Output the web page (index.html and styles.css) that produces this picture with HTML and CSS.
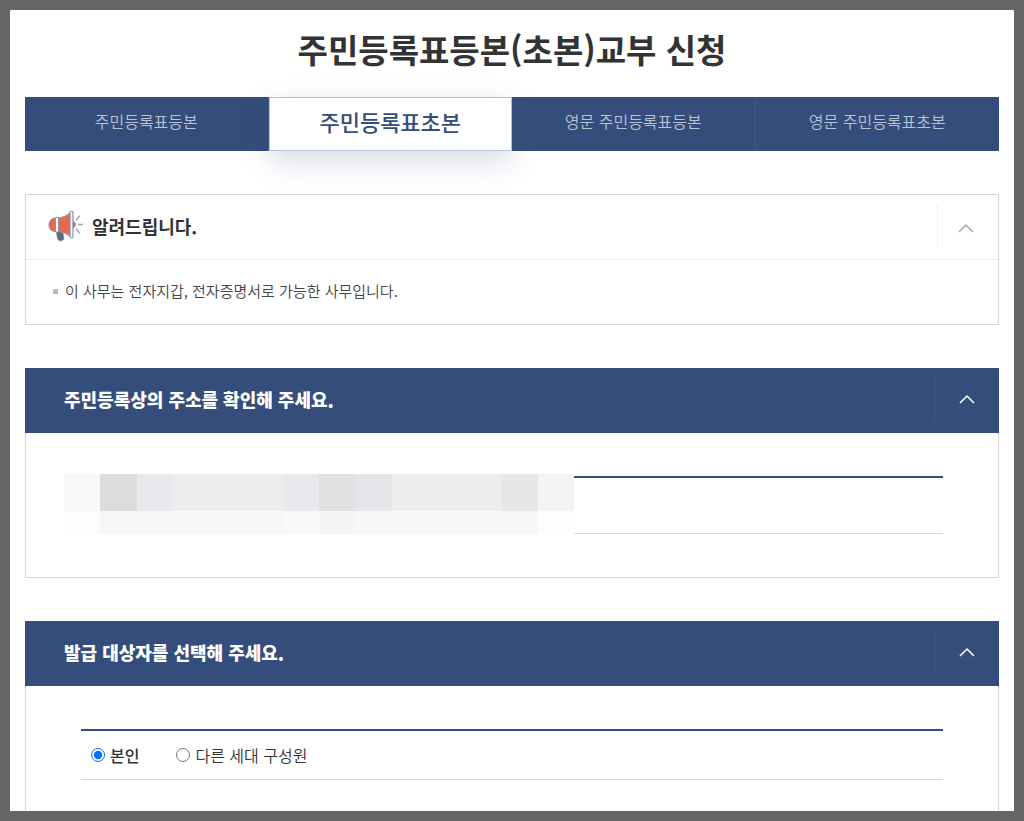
FILE: index.html
```html
<!DOCTYPE html>
<html lang="ko">
<head>
<meta charset="utf-8">
<meta name="viewport" content="width=device-width, initial-scale=1">
<title>주민등록표등본(초본)교부 신청</title>
<link rel="stylesheet" href="styles.css">
</head>
<body>
<main class="page">
  <h1 class="page-title">주민등록표등본(초본)교부 신청</h1>

  <nav class="tabs">
    <a class="tab" href="#">주민등록표등본</a>
    <a class="tab tab-active" href="#" aria-current="page">주민등록표초본</a>
    <a class="tab" href="#">영문 주민등록표등본</a>
    <a class="tab" href="#">영문 주민등록표초본</a>
  </nav>

  <section class="notice">
    <header class="notice-head">
      <svg class="megaphone" viewBox="0 0 36 32" aria-hidden="true">
        <path d="M8 20h6.500l1.500 9q-1 2-3.500 1.800-2.500 0-3-2z" fill="#5b6c80" stroke="#8b91ad" stroke-width=".8"/>
        <path d="M7.500 8H6.500Q1 9.500 1 15T6.500 21.500h1z" fill="#e46a4c" stroke="#8b91ad" stroke-width="1"/>
        <path d="M10.500 8Q17 7.500 23 2.500v24Q17 22 10.500 21.500z" fill="#e46a4c"/>
        <path d="M7.500 7.500h3v14.500h-3z" fill="#fff" stroke="#8b91ad" stroke-width="1"/>
        <path d="M10.500 8Q17 7.500 22.500 2.500M10.500 21.500Q17 22 22.500 26.500" fill="none" stroke="#8b91ad" stroke-width="1"/>
        <path d="M25 11.500q2.500 .5 2.500 3t-2.500 3z" fill="#c95f50" stroke="#8b91ad" stroke-width=".8"/>
        <rect x="22" y="1" width="3" height="27" rx="1.500" fill="#f4f4fa" stroke="#8b91ad" stroke-width="1.200"/>
        <path d="M28.500 10l3-4M30.500 14.500h4M28.500 19l3 4" fill="none" stroke="#a0a4b4" stroke-width="1.300" stroke-linecap="round"/>
      </svg>
      <h2 class="notice-title">알려드립니다.</h2>
      <button class="toggle" type="button" aria-label="접기" aria-expanded="true">
        <svg class="chevron" viewBox="0 0 16 10" aria-hidden="true"><path d="M1 9l7-7 7 7"/></svg>
      </button>
    </header>
    <ul class="notice-list">
      <li class="notice-item">이 사무는 전자지갑, 전자증명서로 가능한 사무입니다.</li>
    </ul>
  </section>

  <section class="panel">
    <header class="panel-head">
      <h2 class="panel-title">주민등록상의 주소를 확인해 주세요.</h2>
      <button class="toggle toggle-light" type="button" aria-label="접기" aria-expanded="true">
        <svg class="chevron" viewBox="0 0 16 10" aria-hidden="true"><path d="M1 9l7-7 7 7"/></svg>
      </button>
    </header>
    <div class="panel-body address">
      <div class="mosaic" aria-hidden="true">
        <i class="m-ice"></i><i class="m-dark"></i><i class="m-blue"></i><i></i><i></i><i></i><i class="m-blue"></i><i class="m-grey"></i><i class="m-steel"></i><i></i><i></i><i></i><i class="m-mid"></i><i class="m-cool"></i>
        <i class="m-faint"></i><i class="m-low"></i><i class="m-low"></i><i class="m-low"></i><i class="m-low"></i><i class="m-low"></i><i class="m-pale"></i><i class="m-soft"></i><i class="m-low"></i><i class="m-low"></i><i class="m-low"></i><i class="m-low"></i><i class="m-low"></i><i class="m-faint"></i>
      </div>
      <div class="address-row"></div>
    </div>
  </section>

  <section class="panel">
    <header class="panel-head">
      <h2 class="panel-title">발급 대상자를 선택해 주세요.</h2>
      <button class="toggle toggle-light" type="button" aria-label="접기" aria-expanded="true">
        <svg class="chevron" viewBox="0 0 16 10" aria-hidden="true"><path d="M1 9l7-7 7 7"/></svg>
      </button>
    </header>
    <div class="panel-body target">
      <div class="choices">
        <label class="choice choice-on"><input class="radio" type="radio" name="target" checked>본인</label>
        <label class="choice"><input class="radio" type="radio" name="target">다른 세대 구성원</label>
      </div>
    </div>
  </section>
</main>
</body>
</html>
```
FILE: styles.css
```css
* {
  box-sizing: border-box;
}

body {
  margin: 0;
  height: 100vh;
  padding: 10px;
  background: #666;
  color: #333;
  font-family: "Noto Sans CJK KR", sans-serif;
  font-size: 16px;
  line-height: 24px;
}

.page {
  height: 100%;
  padding: 15px 15px 0;
  overflow: hidden;
  background: #fff;
}

.page-title {
  margin: 0 0 24px;
  font-size: 33px;
  line-height: 48px;
  font-weight: 700;
  text-align: center;
}

.tabs {
  display: grid;
  grid-template-columns: repeat(4, 1fr);
  margin-bottom: 43px;
}

.tab {
  display: flex;
  align-items: center;
  justify-content: center;
  height: 54px;
  padding-bottom: 6px;
  border-right: 1px solid #425a89;
  background: #344d7a;
  color: #b9c3d6;
  font-size: 16px;
  font-weight: 350;
  text-decoration: none;
}

.tab:last-child {
  border-right: 0;
}

.tab-active {
  border: 1px solid #b8bfd9;
  background: #fff;
  box-shadow: 0 10px 30px rgba(52, 77, 122, 0.2);
  color: #344d7a;
  font-size: 22px;
  font-weight: 500;
}

.notice {
  margin-bottom: 43px;
  border: 1px solid #d5d5d5;
}

.notice-head {
  display: flex;
  align-items: center;
  height: 65px;
  padding: 0 0 2px 22px;
  border-bottom: 1px solid #eee;
}

.megaphone {
  width: 36px;
  height: 32px;
}

.notice-title {
  flex: 1;
  margin: 0 0 0 8px;
  font-size: 18px;
  font-weight: 700;
}

.toggle {
  display: flex;
  align-items: center;
  justify-content: center;
  width: 61px;
  height: 44px;
  padding: 3px 5px 0 0;
  border: 0;
  border-left: 1px solid #f0f0f0;
  background: none;
  color: #aaa;
}

.toggle-light {
  width: 65px;
  padding: 0;
  border-left-color: #43598a;
  color: #fff;
}

.chevron {
  width: 16px;
  height: 10px;
  fill: none;
  stroke: currentColor;
  stroke-width: 1.5;
}

.notice-list {
  margin: 0;
  padding: 19px 27px 21px;
  list-style: none;
}

.notice-item {
  display: flex;
  align-items: center;
  gap: 7px;
  color: #444;
  font-size: 15px;
  font-weight: 350;
}

.notice-item::before {
  content: "";
  width: 5px;
  height: 5px;
  background: #bbb;
}

.panel {
  margin-bottom: 43px;
}

.panel-head {
  display: flex;
  align-items: center;
  height: 65px;
  padding: 0 0 3px 39px;
  background: #344d7a;
  color: #fff;
}

.panel-title {
  flex: 1;
  margin: 0;
  font-size: 18px;
  font-weight: 900;
}

.panel-body {
  border: 1px solid #d5d5d5;
  border-top: 0;
}

.address {
  display: flex;
  padding: 41px 55px 43px 38px;
}

.mosaic {
  display: grid;
  grid-template-columns: repeat(14, 1fr);
  grid-template-rows: 37px 23px;
  flex: 0 0 510px;
  background: #ededee;
}

.m-ice { background: #f6f8fa; }
.m-dark { background: #dcdcdd; }
.m-blue { background: #e7e9ed; }
.m-grey { background: #e0e1e2; }
.m-steel { background: #e3e5e8; }
.m-mid { background: #e6e7e8; }
.m-cool { background: #f2f4f6; }
.m-faint { background: #fdfdfd; }
.m-low { background: #f7f7f7; }
.m-pale { background: #f9f9f9; }
.m-soft { background: #f5f5f5; }

.address-row {
  flex: 1;
  margin-top: 2px;
  border-top: 2px solid #344d7a;
  border-bottom: 1px solid #d9d9d9;
}

.target {
  padding: 43px 55px;
}

.choices {
  display: flex;
  align-items: center;
  gap: 37px;
  height: 51px;
  padding: 0 10px;
  border-top: 2px solid #344d7a;
  border-bottom: 1px solid #d9d9d9;
}

.choice {
  display: flex;
  align-items: center;
  gap: 5px;
  font-weight: 350;
}

.choice-on {
  font-weight: 500;
}

.radio {
  width: 14px;
  height: 14px;
  margin: 0;
}
```
